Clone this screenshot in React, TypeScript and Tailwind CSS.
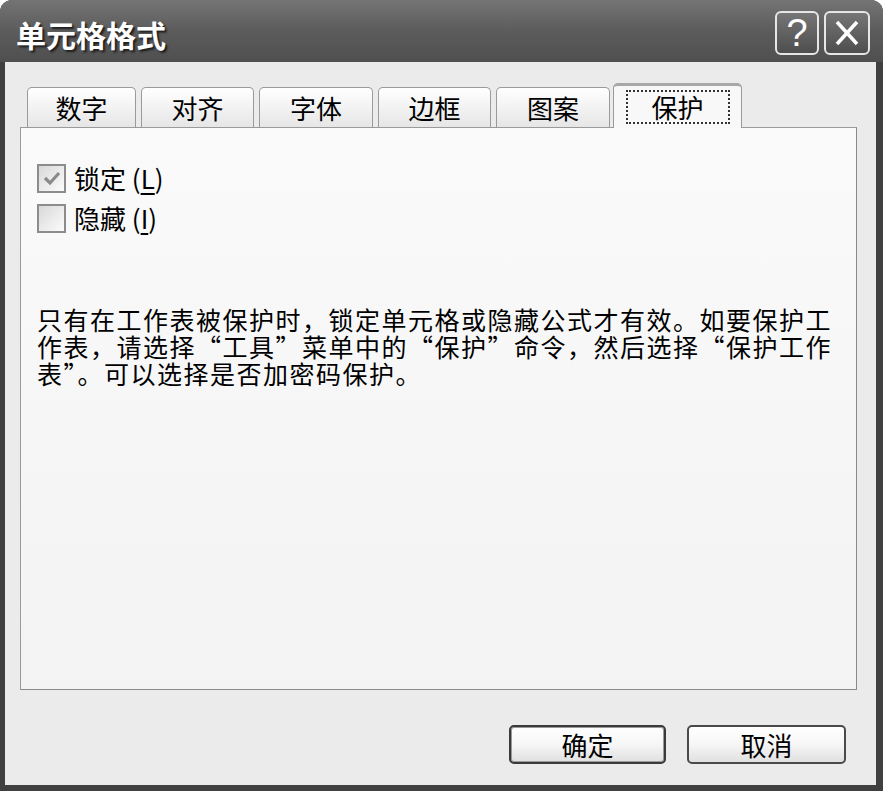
import React from 'react'

const TABS = [
  { label: '数字', w: 'w-[109px]' },
  { label: '对齐', w: 'w-[113px]' },
  { label: '字体', w: 'w-[114px]' },
  { label: '边框', w: 'w-[113px]' },
  { label: '图案', w: 'w-[114px]' },
]

function CheckBox({ checked }: { checked?: boolean }) {
  return (
    <div className="w-[29px] h-[29px] border-2 border-[#8c8c8c] bg-gradient-to-br from-[#d9d9d9] to-[#fbfbfb] flex items-center justify-center">
      {checked && (
        <svg width="20" height="20" viewBox="0 0 20 20">
          <polyline points="3,10 8,15 17,5" fill="none" stroke="#8a8a8a" strokeWidth="3.2" />
        </svg>
      )}
    </div>
  )
}

function DlgButton({ label, main }: { label: string; main?: boolean }) {
  return (
    <button
      className={`h-[39px] rounded-[5px] border-2 ${main ? 'w-[157px] border-[#3a3a3a] shadow-[inset_0_0_0_1px_#9a9a9a]' : 'w-[159px] border-[#4a4a4a]'} bg-gradient-to-b from-white via-[#f6f6f6] to-[#e0e0e0] text-[26px] leading-none text-black flex items-center justify-center`}
    >
      {label}
    </button>
  )
}

export default function App() {
  return (
    <div className="w-[883px] h-[791px] bg-white font-['Noto_Sans_CJK_SC','Liberation_Sans',sans-serif]">
      <div className="h-full flex flex-col rounded-t-[12px] overflow-hidden bg-[#404040]">
        {/* title bar */}
        <div className="h-[62px] shrink-0 flex items-center justify-between pl-4 pr-[13px] bg-gradient-to-b from-[#747474] via-[#5c5c5c] to-[#4f4f4f]">
          <span className="text-[30px] font-bold text-white leading-none mt-[6px] [text-shadow:2px_2px_2px_#1e1e1e]">单元格格式</span>
          <div className="flex gap-[5px] mt-[4px]">
            <div className="w-[44px] h-[44px] rounded-[6px] border-2 border-[#e6e6e6] bg-gradient-to-b from-[#767676] to-[#4e4e4e] flex items-center justify-center text-white text-[38px] leading-none font-['Liberation_Sans',sans-serif]">
              ?
            </div>
            <div className="w-[46px] h-[44px] rounded-[6px] border-2 border-[#e6e6e6] bg-gradient-to-b from-[#767676] to-[#4e4e4e] flex items-center justify-center">
              <svg width="28" height="28" viewBox="0 0 28 28">
                <path d="M4 3 L24 25 M24 3 L4 25" stroke="white" strokeWidth="3.5" />
              </svg>
            </div>
          </div>
        </div>

        {/* body */}
        <div className="flex-1 ml-[5px] mr-[7px] mb-[6px] bg-[#ebebeb] flex flex-col pl-[15px] pr-[19px]">
          {/* tabs */}
          <div className="pt-[21px] pl-[7px] flex items-end">
            {TABS.map((t, i) => (
              <div
                key={t.label}
                className={`${t.w} ${i > 0 ? 'ml-[5px]' : ''} h-[40px] rounded-t-[5px] border border-b-0 border-[#9a9a9a] bg-gradient-to-b from-white to-[#e6e6e6] flex items-center justify-center text-[26px] leading-none text-black`}
              >
                {t.label}
              </div>
            ))}
            <div className="ml-[3px] w-[129px] h-[45px] mb-[-1px] relative z-10 rounded-t-[5px] border border-b-0 border-[#9a9a9a] border-t-[3px] border-t-[#a8a8a8] bg-[#f8f8f8] flex items-center justify-center">
              <div className="w-[104px] h-[34px] border-2 border-dotted border-[#333] flex items-center justify-center text-[26px] leading-none text-black">
                保护
              </div>
            </div>
          </div>

          {/* panel */}
          <div className="flex-1 border border-[#9a9a9a] border-r-[#8a8a8a] border-b-[#8a8a8a] bg-gradient-to-b from-[#fafafa] to-[#f3f3f3] pl-[16px] pt-[35px]">
            <div className="flex flex-col gap-[10px]">
              <div className="flex items-center gap-[8px] h-[30px]">
                <CheckBox checked />
                <span className="text-[26px] leading-none text-black">
                  锁定 (<span className="underline underline-offset-4">L</span>)
                </span>
              </div>
              <div className="flex items-center gap-[8px] h-[30px]">
                <CheckBox />
                <span className="text-[26px] leading-none text-black">
                  隐藏 (<span className="underline underline-offset-4">I</span>)
                </span>
              </div>
            </div>
            <div className="mt-[73px] whitespace-nowrap text-[25px] tracking-[1.5px] text-black [font-feature-settings:'fwid'] flex flex-col">
              <span className="h-[27px] leading-[27px]">只有在工作表被保护时，锁定单元格或隐藏公式才有效。如要保护工</span>
              <span className="h-[27px] leading-[27px]">作表，请选择“工具”菜单中的“保护”命令，然后选择“保护工作</span>
              <span className="h-[27px] leading-[27px]">表”。可以选择是否加密码保护。</span>
            </div>
          </div>

          {/* buttons */}
          <div className="shrink-0 flex justify-end gap-[21px] pr-[11px] pt-[35px] pb-[21px]">
            <DlgButton label="确定" main />
            <DlgButton label="取消" />
          </div>
        </div>
      </div>
    </div>
  )
}
